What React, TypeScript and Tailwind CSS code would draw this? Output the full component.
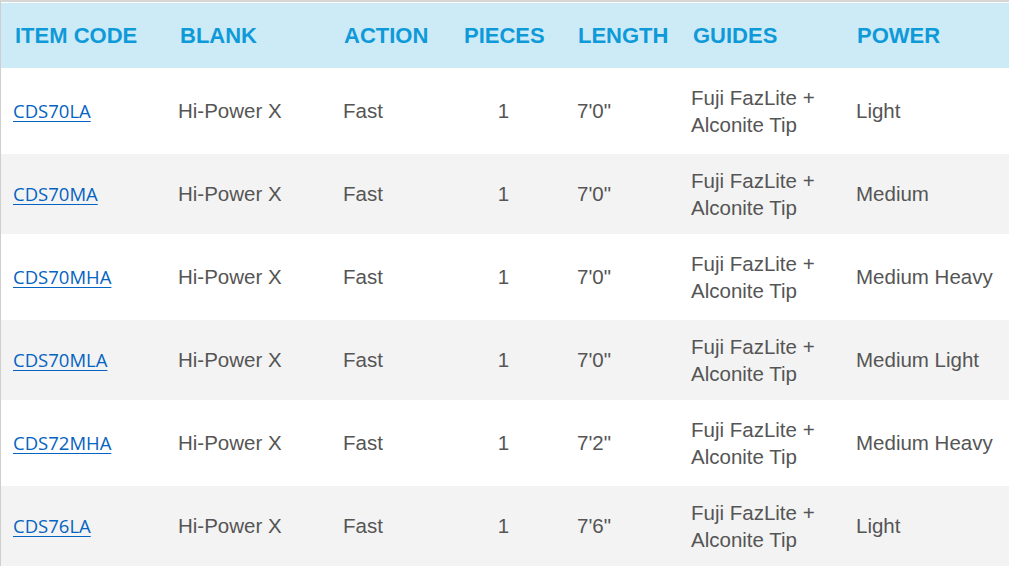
import React from "react";

const rows = [
  { code: "CDS70LA", len: "7'0\"", power: "Light" },
  { code: "CDS70MA", len: "7'0\"", power: "Medium" },
  { code: "CDS70MHA", len: "7'0\"", power: "Medium Heavy" },
  { code: "CDS70MLA", len: "7'0\"", power: "Medium Light" },
  { code: "CDS72MHA", len: "7'2\"", power: "Medium Heavy" },
  { code: "CDS76LA", len: "7'6\"", power: "Light" },
];

const cols = "grid grid-cols-[164px_165px_121px_113px_114px_165px_166px]";

export default function App() {
  return (
    <div className="w-[1009px] h-[568px] overflow-hidden bg-white font-['Liberation_Sans',Arial,sans-serif]">
      <div className="border-t-2 border-[#d6d6d6] border-l border-l-[#cfcfcf] pt-px">
        <div className={`${cols} h-[65px] items-center bg-[#cdeaf7] text-[22px] font-bold text-[#0e9ad8]`}>
          <div className="pl-[14px]">ITEM CODE</div>
          <div className="pl-[15px]">BLANK</div>
          <div className="pl-[14px]">ACTION</div>
          <div className="pl-[13px]">PIECES</div>
          <div className="pl-[14px]">LENGTH</div>
          <div className="pl-[15px]">GUIDES</div>
          <div className="pl-[14px]">POWER</div>
        </div>
        {rows.map((r, i) => (
          <div
            key={r.code}
            className={`${cols} items-center text-[20.5px] text-[#555555] ${
              i % 2 === 0 ? "h-[86px] bg-white" : "h-[80px] bg-[#f3f3f3]"
            }`}
          >
            <div className="pl-[12px]">
              <a
                href="#"
                className="font-['Open_Sans',sans-serif] text-[18.5px] text-[#0563c1] underline underline-offset-[3px] decoration-1"
              >
                {r.code}
              </a>
            </div>
            <div className="pl-[13px]">Hi-Power X</div>
            <div className="pl-[13px]">Fast</div>
            <div className="pr-[8px] text-center">1</div>
            <div className="pl-[13px]">{r.len}</div>
            <div className="pl-[13px] leading-[27px]">
              Fuji FazLite +
              <br />
              Alconite Tip
            </div>
            <div className="pl-[13px]">{r.power}</div>
          </div>
        ))}
      </div>
    </div>
  );
}
